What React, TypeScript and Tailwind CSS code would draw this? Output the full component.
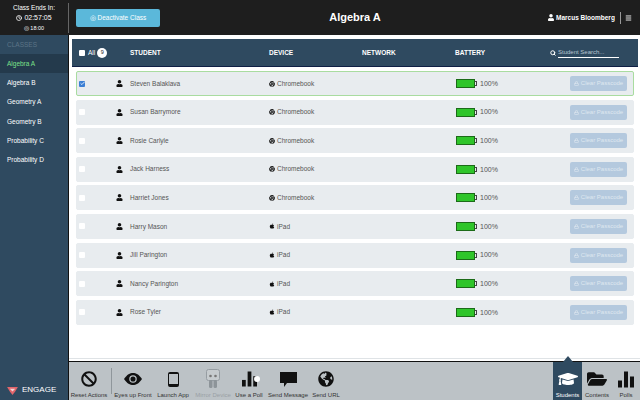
import { Check, Clock, Lock, Search, Menu } from "lucide-react";
import { FaApple, FaChrome, FaUser, FaGraduationCap, FaFolderOpen, FaBan, FaGlobeAmericas } from "react-icons/fa";

const students = [
  { name: "Steven Balaklava", device: "Chromebook", selected: true },
  { name: "Susan Barrymore", device: "Chromebook" },
  { name: "Rosie Carlyle", device: "Chromebook" },
  { name: "Jack Harness", device: "Chromebook" },
  { name: "Harriet Jones", device: "Chromebook" },
  { name: "Harry Mason", device: "iPad" },
  { name: "Jill Parington", device: "iPad" },
  { name: "Nancy Parington", device: "iPad" },
  { name: "Rose Tyler", device: "iPad" },
];

const classes = ["Algebra A", "Algebra B", "Geometry A", "Geometry B", "Probability C", "Probability D"];

const Bars = ({ className }: { className: string }) => (
  <svg viewBox="0 0 16 16" className={className} fill="currentColor">
    <rect x="0" y="9" width="4" height="7" />
    <rect x="6" y="0" width="4" height="16" />
    <rect x="12" y="5" width="4" height="11" />
  </svg>
);

const Battery = () => (
  <div className="flex items-center">
    <div className="w-[19px] h-[9px] bg-[#2fc52a] border border-[#1c6b18]" />
    <div className="w-[2px] h-[5px] border border-l-0 border-[#444]" />
  </div>
);

const Tool = ({ label, children, w, labelClass }: { label: string; children: React.ReactNode; w: string; labelClass?: string }) => (
  <div className={`${w} flex flex-col items-center shrink-0 pt-[7px] text-[#111]`}>
    <div className="h-[20px] flex items-center justify-center">{children}</div>
    <div className={`text-[6px] leading-[8px] mt-[2px] whitespace-nowrap ${labelClass ?? "text-[#333]"}`}>{label}</div>
  </div>
);

const Row = ({ s }: { s: (typeof students)[number] }) => (
  <div
    className={`h-[25px] flex items-center rounded-[2px] bg-[#e8ecef] text-[6.5px] text-[#555] border ${
      s.selected ? "border-[#a9dca0]" : "border-[#e8ecef]"
    }`}
  >
    <div className="w-[39px] pl-[2px] shrink-0">
      {s.selected ? (
        <div className="w-[6px] h-[6px] rounded-[1px] bg-[#3b7fd4] flex items-center justify-center">
          <Check className="w-[5px] h-[5px] text-white" strokeWidth={4} />
        </div>
      ) : (
        <div className="w-[6px] h-[6px] rounded-[1px] bg-white" />
      )}
    </div>
    <div className="w-[14px] shrink-0">
      <FaUser className="w-[7px] h-[7px] text-[#111]" />
    </div>
    <div className="w-[139px] shrink-0">{s.name}</div>
    <div className="w-[187px] shrink-0 flex items-center gap-[2px]">
      {s.device === "iPad" ? <FaApple className="w-[6px] h-[6px] text-[#111]" /> : <FaChrome className="w-[6px] h-[6px] text-[#222]" />}
      <span>{s.device}</span>
    </div>
    <div className="w-[24px] shrink-0"><Battery /></div>
    <div className="w-[90px] shrink-0 text-[7px] pt-[1px]">100%</div>
    <div className="w-[57px] h-[15px] rounded-[2px] bg-[#b4c9de] text-[#dfe8f0] flex items-center justify-center gap-[2px] shrink-0">
      <Lock className="w-[5px] h-[5px]" strokeWidth={3} />
      <span className="text-[6px]">Clear Passcode</span>
    </div>
  </div>
);

export default function App() {
  return (
    <div className="w-[640px] h-[400px] flex flex-col overflow-hidden bg-white font-['Liberation_Sans',sans-serif]">
      <header className="h-[35px] shrink-0 bg-[#1e1e1e] flex items-center text-white">
        <div className="w-[68px] shrink-0 flex flex-col items-center text-[6.5px] leading-[10px]">
          <div>Class Ends In:</div>
          <div className="flex items-center gap-[2px] text-[7px]"><Clock className="w-[6px] h-[6px]" strokeWidth={3} />02:57:05</div>
          <div className="text-[5.5px]">◎ 18:00</div>
        </div>
        <div className="w-[1px] h-[30px] bg-[#666]" />
        <div className="w-[84px] h-[18px] ml-[7px] rounded-[2px] bg-[#5bb8da] text-[6.5px] flex items-center justify-center shrink-0">
          ◎ Deactivate Class
        </div>
        <div className="w-[390px] shrink-0 text-center text-[11px] font-bold">Algebra A</div>
        <div className="flex items-center text-[6.5px] font-bold shrink-0 whitespace-nowrap -ml-[2px]">
          <FaUser className="w-[6px] h-[7px] mr-[2px]" />
          Marcus Bloomberg
          <div className="w-[1px] h-[12px] bg-[#999] ml-[5px] mr-[4px]" />
          <Menu className="w-[7px] h-[8px]" strokeWidth={3} />
        </div>
      </header>

      <div className="flex-1 flex min-h-0">
        <aside className="w-[69px] shrink-0 bg-[#2f4a60] border-r border-[#111] flex flex-col justify-between">
          <div>
            <div className="h-[19px] pl-[7px] text-[6.5px] text-[#5c7486] flex items-center">CLASSES</div>
            {classes.map((c, i) => (
              <div
                key={c}
                className={`h-[19.3px] pl-[7px] flex items-center text-[6.5px] ${i === 0 ? "bg-[#243a4c] text-[#7be08a]" : "text-white"}`}
              >
                {c}
              </div>
            ))}
          </div>
          <div className="h-[20px] flex items-center pl-[7px] gap-[4px] text-white text-[8px]">
            <svg viewBox="0 0 12 10" className="w-[11px] h-[9px]">
              <path d="M0 1h12L9 6 6 10 3 6z" fill="#e0656b" />
              <path d="M3 3h6L6 6z" fill="#f3d6d8" />
            </svg>
            ENGAGE
          </div>
        </aside>

        <div className="flex-1 flex flex-col min-w-0">
          <main className="flex-1 pt-[4px] pl-[3px] pr-[2px] min-h-0 flex flex-col gap-[4px] border-b border-[#dfe3e6] mb-[2px]">
            <div className="h-[28px] shrink-0 bg-[#2f4a60] border-b border-[#0f1f45] flex items-center text-white text-[6.5px]">
              <div className="w-[58px] pl-[7px] flex items-center shrink-0">
                <div className="w-[6px] h-[6px] bg-white rounded-[1px] mr-[3px]" />
                <span>All</span>
                <div className="w-[10px] h-[10px] rounded-full bg-white text-[#222] text-[5.5px] flex items-center justify-center ml-[2px]">9</div>
              </div>
              <div className="w-[139px] shrink-0 font-semibold">STUDENT</div>
              <div className="w-[93px] shrink-0 font-semibold">DEVICE</div>
              <div className="w-[93px] shrink-0 font-semibold">NETWORK</div>
              <div className="w-[95px] shrink-0 font-semibold">BATTERY</div>
              <div className="w-[70px] flex items-center gap-[2px] shrink-0">
                <Search className="w-[6px] h-[6px]" strokeWidth={4} />
                <span className="w-[61px] border-b border-white text-[6px] leading-[9px] text-[#b9c6d1]">Student Search...</span>
              </div>
            </div>
            <div className="px-[4px] flex flex-col gap-[3.6px]">
              {students.map((s) => <Row key={s.name} s={s} />)}
            </div>
          </main>

          <footer className="h-[39px] shrink-0 bg-[#bcc2c6] border-t border-[#111] flex items-start relative">
            <div className="w-[1px] shrink-0" />
            <Tool label="Reset Actions" w="w-[38px]"><FaBan className="w-[16px] h-[16px]" /></Tool>
            <div className="w-[3px] shrink-0" />
            <div className="w-[1px] h-[26px] mt-[6px] bg-[#8f969b] shrink-0" />
            <Tool label="Eyes up Front" w="w-[42px]">
              <svg viewBox="0 0 24 16" className="w-[18px] h-[12px]">
                <path d="M0 8C4 2 8 0 12 0s8 2 12 8c-4 6-8 8-12 8S4 14 0 8z" fill="#111" />
                <circle cx="12" cy="8" r="5" fill="#bcc2c6" />
                <circle cx="12" cy="8" r="3.4" fill="#111" />
              </svg>
            </Tool>
            <Tool label="Launch App" w="w-[38px]">
              <div className="w-[11px] h-[15px] rounded-[2px] border-[1.5px] border-[#111] border-b-[3px] border-t-[2px]" />
            </Tool>
            <Tool label="Mirror Device" w="w-[42px]" labelClass="text-[#9aa0a5]">
              <svg viewBox="0 0 14 20" className="w-[14px] h-[20px]">
                <rect x="0.5" y="0.5" width="13" height="11" rx="2" fill="#c6cbce" stroke="#969da2" />
                <circle cx="4.5" cy="7" r="1.3" fill="#777" />
                <circle cx="9.5" cy="7" r="1.3" fill="#777" />
                <rect x="3" y="11" width="3.5" height="8" rx="1.5" fill="#8d9499" />
                <rect x="7.5" y="11" width="3.5" height="8" rx="1.5" fill="#8d9499" />
              </svg>
            </Tool>
            <Tool label="Use a Poll" w="w-[30px]">
              <div className="relative">
                <Bars className="w-[15px] h-[16px]" />
                <div className="absolute right-[-3px] top-[5px] w-[6px] h-[6px] rounded-full bg-white" />
              </div>
            </Tool>
            <Tool label="Send Message" w="w-[48px]">
              <svg viewBox="0 0 17 15" className="w-[17px] h-[15px]" fill="#111">
                <path d="M0 0h17v11H7l-3 4v-4H0z" />
              </svg>
            </Tool>
            <Tool label="Send URL" w="w-[28px]"><FaGlobeAmericas className="w-[16px] h-[16px]" /></Tool>
            <div className="flex-1" />
            <div className="w-[29px] h-[38px] bg-[#2f4a60] relative shrink-0">
              <div className="absolute -top-[6px] left-[10px] w-0 h-0 border-x-[5px] border-x-transparent border-b-[6px] border-b-[#2f4a60]" />
              <Tool label="Students" w="w-[29px]" labelClass="text-white"><FaGraduationCap className="w-[20px] h-[18px] text-white" /></Tool>
            </div>
            <Tool label="Contents" w="w-[30px]"><FaFolderOpen className="w-[20px] h-[18px]" /></Tool>
            <Tool label="Polls" w="w-[28px]"><Bars className="w-[16px] h-[17px]" /></Tool>
          </footer>
        </div>
      </div>
    </div>
  );
}
